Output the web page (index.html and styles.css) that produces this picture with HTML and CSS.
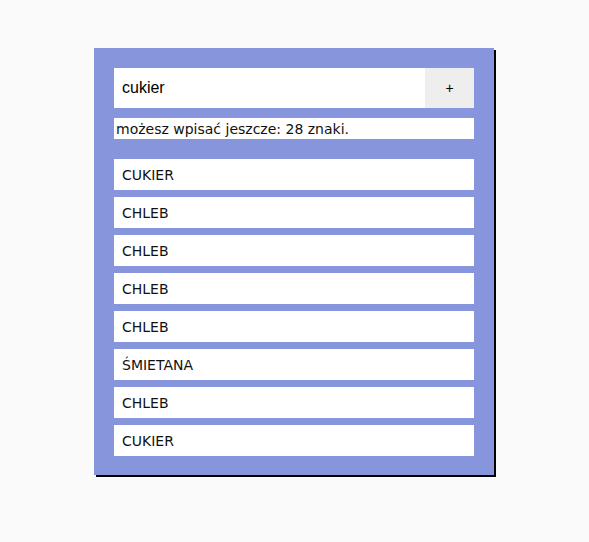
FILE: index.html
```html
<!DOCTYPE html>
<html lang="pl">
<head>
<meta charset="utf-8">
<link rel="stylesheet" href="styles.css">
</head>
<body>
<div class="panel">
  <form class="add-form">
    <input class="add-input" type="text" value="cukier">
    <button class="add-btn" type="button">+</button>
  </form>
  <div class="info">możesz wpisać jeszcze: 28 znaki.</div>
  <ul class="list">
    <li class="item">CUKIER</li>
    <li class="item">CHLEB</li>
    <li class="item">CHLEB</li>
    <li class="item">CHLEB</li>
    <li class="item">CHLEB</li>
    <li class="item">ŚMIETANA</li>
    <li class="item">CHLEB</li>
    <li class="item">CUKIER</li>
  </ul>
</div>
</body>
</html>
```
FILE: styles.css
```css
html, body {
  margin: 0;
  padding: 0;
  background: #fafafa;
}
body {
  padding: 48px 0 40px;
  font-family: "DejaVu Sans", Verdana, sans-serif;
}
.panel {
  width: 360px;
  margin: 0 0 0 94px;
  padding: 20px 20px 19px;
  background: #8796dc;
  box-shadow: 2px 2px 0 #000;
}
.add-form {
  display: flex;
  height: 40px;
  margin: 0;
}
.add-input {
  flex: 1;
  min-width: 0;
  border: none;
  outline: none;
  margin: 0;
  padding: 0 8px;
  height: 40px;
  font-family: "Liberation Sans", Arial, sans-serif;
  font-size: 16px;
  color: #000;
  background: #fff;
}
.add-btn {
  width: 49px;
  height: 40px;
  border: none;
  margin: 0;
  padding: 0;
  background: #eeeeee;
  color: #000;
  font-family: "Liberation Sans", Arial, sans-serif;
  font-size: 14px;
}
.info {
  margin-top: 10px;
  height: 21px;
  line-height: 22px;
  padding-left: 2px;
  background: #fff;
  font-size: 14px;
  color: #111;
}
.list {
  list-style: none;
  margin: 20px 0 0;
  padding: 0;
  display: flex;
  flex-direction: column;
  gap: 7px;
}
.item {
  height: 31px;
  line-height: 32px;
  padding-left: 8px;
  background: #fff;
  font-size: 14px;
  color: #111;
}
```
